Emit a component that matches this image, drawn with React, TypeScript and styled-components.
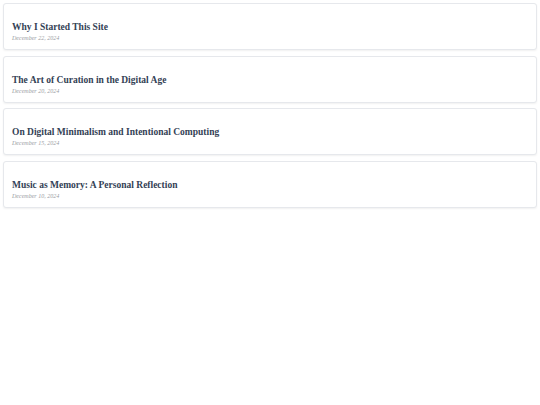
import styled, { createGlobalStyle } from "styled-components";

const Global = createGlobalStyle`
  body {
    margin: 0;
    background: #ffffff;
    font-family: "Liberation Serif", "Times New Roman", serif;
  }
`;

const List = styled.div`
  display: flex;
  flex-direction: column;
  gap: 5.5px;
  padding: 3px 3px;
`;

const Card = styled.article`
  height: 47px;
  box-sizing: border-box;
  padding: 18px 8px 0;
  background: #ffffff;
  border: 1px solid #e6e8ec;
  border-radius: 3px;
  box-shadow: 0 1px 2px rgba(0, 0, 0, 0.06);
`;

const Title = styled.h2`
  margin: 0;
  font-size: 9.5px;
  font-weight: 700;
  color: #334155;
  line-height: 1.25;
`;

const Date = styled.div`
  margin-top: 1.5px;
  font-size: 6px;
  font-style: italic;
  color: #999ca3;
`;

const posts = [
  { title: "Why I Started This Site", date: "December 22, 2024" },
  { title: "The Art of Curation in the Digital Age", date: "December 20, 2024" },
  { title: "On Digital Minimalism and Intentional Computing", date: "December 15, 2024" },
  { title: "Music as Memory: A Personal Reflection", date: "December 10, 2024" },
];

export default function App() {
  return (
    <>
      <Global />
      <List>
        {posts.map((p) => (
          <Card key={p.title}>
            <Title>{p.title}</Title>
            <Date>{p.date}</Date>
          </Card>
        ))}
      </List>
    </>
  );
}
